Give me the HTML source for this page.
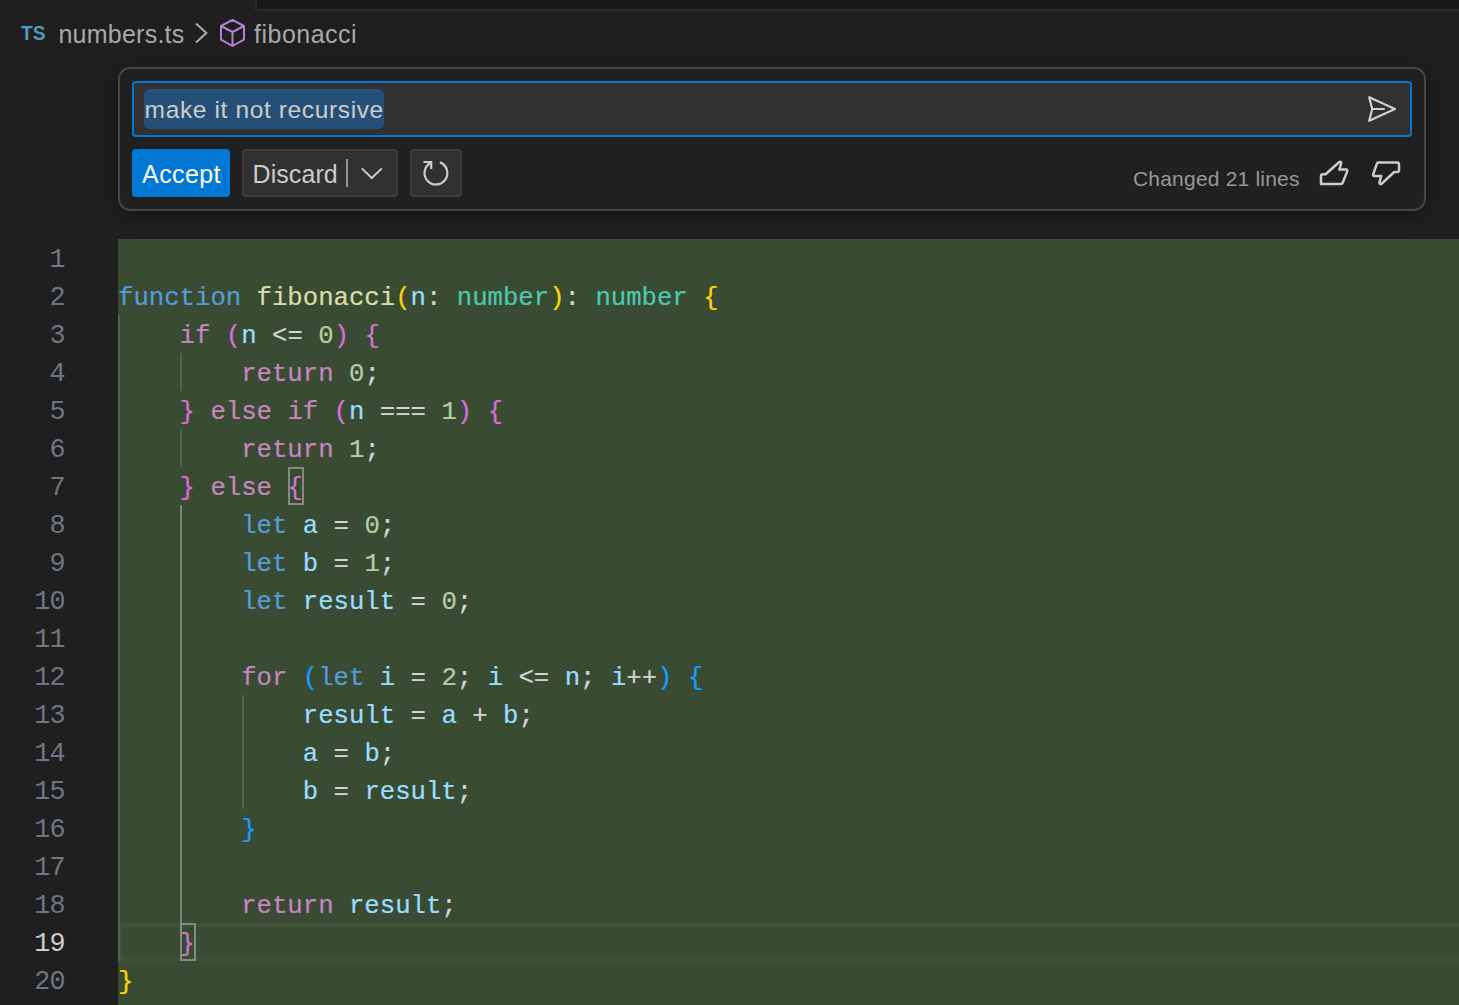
<!DOCTYPE html>
<html lang="en">
<head>
<meta charset="utf-8">
<title>numbers.ts</title>
<style>
*{box-sizing:border-box;margin:0;padding:0}
html,body{width:1459px;height:1005px;overflow:hidden;background:#1f1f1f}
body{position:relative;font-family:"Liberation Sans",sans-serif;color:#ccc}
.abs{position:absolute}
/* tab bar remnant */
#tabs{left:255px;top:0;width:1204px;height:11px;background:#181818;border-left:2px solid #2b2b2b;border-bottom:2px solid #2b2b2b}
/* breadcrumb */
#bc{left:0;top:14px;height:40px;line-height:40px;font-size:25px;color:#a9a9a9;white-space:nowrap}
#bc span{position:absolute;top:0}
#ts{left:21px;top:19.5px;height:26px;line-height:26px;font-size:20.5px;font-weight:bold;color:#519aba;transform:scaleX(.93);transform-origin:0 0}
/* widget */
#w{left:118px;top:67px;width:1308px;height:144px;background:#202020;border:2px solid #454545;border-radius:12px;box-shadow:0 4px 16px rgba(0,0,0,.36)}
#inp{left:132px;top:81px;width:1280px;height:56px;background:#313131;border:2px solid #0078d4;border-radius:4px}
#sel{left:144px;top:89px;width:240px;height:40px;background:#264f78;border-radius:6px}
#it{left:144.6px;top:89px;height:40px;line-height:41px;font-size:24.5px;letter-spacing:.63px;color:#ccc;white-space:nowrap}
#acc{left:132px;top:149px;width:98px;height:48px;background:#0078d4;border-radius:4px;color:#fff;font-size:25px;line-height:50px;text-align:center;letter-spacing:.4px;padding-left:1px}
#dis{left:242px;top:149px;width:156px;height:48px;background:#313131;border:2px solid #3c3c3c;border-radius:4px}
#dist{left:252.5px;top:149px;height:48px;line-height:50px;font-size:25px;color:#ccc;letter-spacing:.08px}
#sep{left:346px;top:159px;width:2px;height:28px;background:#959595}
#ref{left:410px;top:149px;width:52px;height:48px;background:#313131;border:2px solid #3c3c3c;border-radius:4px}
#chg{left:1133px;top:161px;height:36px;line-height:36px;font-size:21px;letter-spacing:.2px;color:#989898;white-space:nowrap}
/* editor */
#green{left:118px;top:239px;width:1341px;height:766px;background:#394c33}
.ln{position:absolute;left:0;width:65px;height:38px;line-height:38px;padding-top:2px;text-align:right;font-family:"Liberation Mono",monospace;font-size:26.8px;letter-spacing:-.68px;color:#6e7681}
.ln.act{color:#ccc}
.cl{position:absolute;left:118px;height:38px;line-height:38px;padding-top:3px;white-space:pre;font-family:"Liberation Mono",monospace;font-size:25.67px;color:#d4d4d4;-webkit-text-stroke:.2px currentColor}
.kw{color:#569cd6}.fn{color:#dcdcaa}.v{color:#9cdcfe}.ty{color:#4ec9b0}.p{color:#d4d4d4}.nu{color:#b5cea8}.ct{color:#c586c0}
.b1{color:#ffd700}.b2{color:#da70d6}.b3{color:#179fff}
.g{position:absolute;width:2px;background:#50654a}
.g.a{background:#73846c}
.bm{position:absolute;width:16px;height:38px;border:2px solid #888;background:rgba(0,100,0,.1)}
#cur{left:118px;top:923px;width:1350px;height:38px;border:4px solid #3f5238}
svg{position:absolute;overflow:visible}
</style>
</head>
<body>
<div id="tabs" class="abs"></div>
<div id="bc" class="abs"><span style="left:58.4px;letter-spacing:.25px">numbers.ts</span><span style="left:254px;letter-spacing:.5px">fibonacci</span></div>
<div id="ts" class="abs">TS</div>
<div id="w" class="abs"></div>
<div id="inp" class="abs"></div>
<div id="sel" class="abs"></div>
<div id="it" class="abs">make it not recursive</div>
<div id="acc" class="abs">Accept</div>
<div id="dis" class="abs"></div>
<div id="dist" class="abs">Discard</div>
<div id="sep" class="abs"></div>
<div id="ref" class="abs"></div>
<div id="chg" class="abs">Changed 21 lines</div>
<svg id="ico" class="abs" style="left:0;top:0" width="1459" height="240" viewBox="0 0 1459 240" fill="none" stroke-linecap="round" stroke-linejoin="round">
<!-- breadcrumb chevron -->
<path d="M196 23.6 L206.4 33 L196 42.4" stroke="#a9a9a9" stroke-width="2" stroke-linecap="butt" stroke-linejoin="miter"/>
<!-- cube -->
<path d="M232.5 19.8 L244 26 V39.6 L232.5 46 L221 39.6 V26 Z M221 26 L232.5 32 L244 26 M232.5 32 V46" stroke="#b180d7" stroke-width="2"/>
<!-- send -->
<path d="M1369.2 97.2 L1395 109 L1369.2 120.8 L1372.2 109 Z M1372.2 109 H1384" stroke="#d0d0d0" stroke-width="2.2"/>
<!-- chevron down -->
<path d="M361.8 168.4 L371.8 178 L381.8 168.4" stroke="#ccc" stroke-width="2" stroke-linecap="butt" stroke-linejoin="miter"/>
<!-- refresh -->
<path d="M439.9 162.4 A11.4 11.4 0 1 1 430.6 163" stroke="#ccc" stroke-width="2.2" stroke-linecap="butt"/>
<path d="M423.4 162 H431.2 V169" stroke="#ccc" stroke-width="2.2" stroke-linecap="butt" stroke-linejoin="miter"/>
<!-- thumbs up -->
<path d="M1321 184 V176 Q1321 174.3 1322.8 174.3 H1325.6 L1339 162.2 Q1340.6 161 1341.3 163 L1339.3 169.6 H1346 Q1347.8 169.8 1347.2 171.4 L1342.6 183 Q1342.2 184 1341 184 Z" stroke="#ccc" stroke-width="2.5"/>
<!-- thumbs down -->
<path d="M1378 162.4 H1397.2 Q1399 162.4 1399 164.2 V170.2 Q1399 172 1397.2 172 H1394.2 L1381.8 183.6 Q1380 184.8 1379.4 182.8 L1381.2 176 H1374.6 Q1372.6 175.8 1373.2 174.2 L1377 163.4 Q1377.3 162.4 1378.4 162.4 Z" stroke="#ccc" stroke-width="2.5"/>
</svg>
<div id="green" class="abs"></div>
<div id="cur" class="abs"></div>
<div class="g" style="left:118px;top:315px;height:646px"></div>
<div class="g" style="left:180px;top:353px;height:38px"></div>
<div class="g" style="left:180px;top:429px;height:38px"></div>
<div class="g a" style="left:180px;top:505px;height:418px"></div>
<div class="g" style="left:242px;top:695px;height:114px"></div>
<div class="bm" style="left:288px;top:467px"></div>
<div class="bm" style="left:180px;top:923px"></div>
<div class="ln" style="top:239px">1</div>
<div class="ln" style="top:277px">2</div>
<div class="ln" style="top:315px">3</div>
<div class="ln" style="top:353px">4</div>
<div class="ln" style="top:391px">5</div>
<div class="ln" style="top:429px">6</div>
<div class="ln" style="top:467px">7</div>
<div class="ln" style="top:505px">8</div>
<div class="ln" style="top:543px">9</div>
<div class="ln" style="top:581px">10</div>
<div class="ln" style="top:619px">11</div>
<div class="ln" style="top:657px">12</div>
<div class="ln" style="top:695px">13</div>
<div class="ln" style="top:733px">14</div>
<div class="ln" style="top:771px">15</div>
<div class="ln" style="top:809px">16</div>
<div class="ln" style="top:847px">17</div>
<div class="ln" style="top:885px">18</div>
<div class="ln act" style="top:923px">19</div>
<div class="ln" style="top:961px">20</div>
<div class="cl" style="top:239px"></div>
<div class="cl" style="top:277px"><span class="kw">function</span> <span class="fn">fibonacci</span><span class="b1">(</span><span class="v">n</span><span class="p">:</span> <span class="ty">number</span><span class="b1">)</span><span class="p">:</span> <span class="ty">number</span> <span class="b1">{</span></div>
<div class="cl" style="top:315px">    <span class="ct">if</span> <span class="b2">(</span><span class="v">n</span> <span class="p">&lt;=</span> <span class="nu">0</span><span class="b2">)</span> <span class="b2">{</span></div>
<div class="cl" style="top:353px">        <span class="ct">return</span> <span class="nu">0</span><span class="p">;</span></div>
<div class="cl" style="top:391px">    <span class="b2">}</span> <span class="ct">else</span> <span class="ct">if</span> <span class="b2">(</span><span class="v">n</span> <span class="p">===</span> <span class="nu">1</span><span class="b2">)</span> <span class="b2">{</span></div>
<div class="cl" style="top:429px">        <span class="ct">return</span> <span class="nu">1</span><span class="p">;</span></div>
<div class="cl" style="top:467px">    <span class="b2">}</span> <span class="ct">else</span> <span class="b2">{</span></div>
<div class="cl" style="top:505px">        <span class="kw">let</span> <span class="v">a</span> <span class="p">=</span> <span class="nu">0</span><span class="p">;</span></div>
<div class="cl" style="top:543px">        <span class="kw">let</span> <span class="v">b</span> <span class="p">=</span> <span class="nu">1</span><span class="p">;</span></div>
<div class="cl" style="top:581px">        <span class="kw">let</span> <span class="v">result</span> <span class="p">=</span> <span class="nu">0</span><span class="p">;</span></div>
<div class="cl" style="top:619px"></div>
<div class="cl" style="top:657px">        <span class="ct">for</span> <span class="b3">(</span><span class="kw">let</span> <span class="v">i</span> <span class="p">=</span> <span class="nu">2</span><span class="p">;</span> <span class="v">i</span> <span class="p">&lt;=</span> <span class="v">n</span><span class="p">;</span> <span class="v">i</span><span class="p">++</span><span class="b3">)</span> <span class="b3">{</span></div>
<div class="cl" style="top:695px">            <span class="v">result</span> <span class="p">=</span> <span class="v">a</span> <span class="p">+</span> <span class="v">b</span><span class="p">;</span></div>
<div class="cl" style="top:733px">            <span class="v">a</span> <span class="p">=</span> <span class="v">b</span><span class="p">;</span></div>
<div class="cl" style="top:771px">            <span class="v">b</span> <span class="p">=</span> <span class="v">result</span><span class="p">;</span></div>
<div class="cl" style="top:809px">        <span class="b3">}</span></div>
<div class="cl" style="top:847px"></div>
<div class="cl" style="top:885px">        <span class="ct">return</span> <span class="v">result</span><span class="p">;</span></div>
<div class="cl" style="top:923px">    <span class="b2">}</span></div>
<div class="cl" style="top:961px"><span class="b1">}</span></div>
</body>
</html>
